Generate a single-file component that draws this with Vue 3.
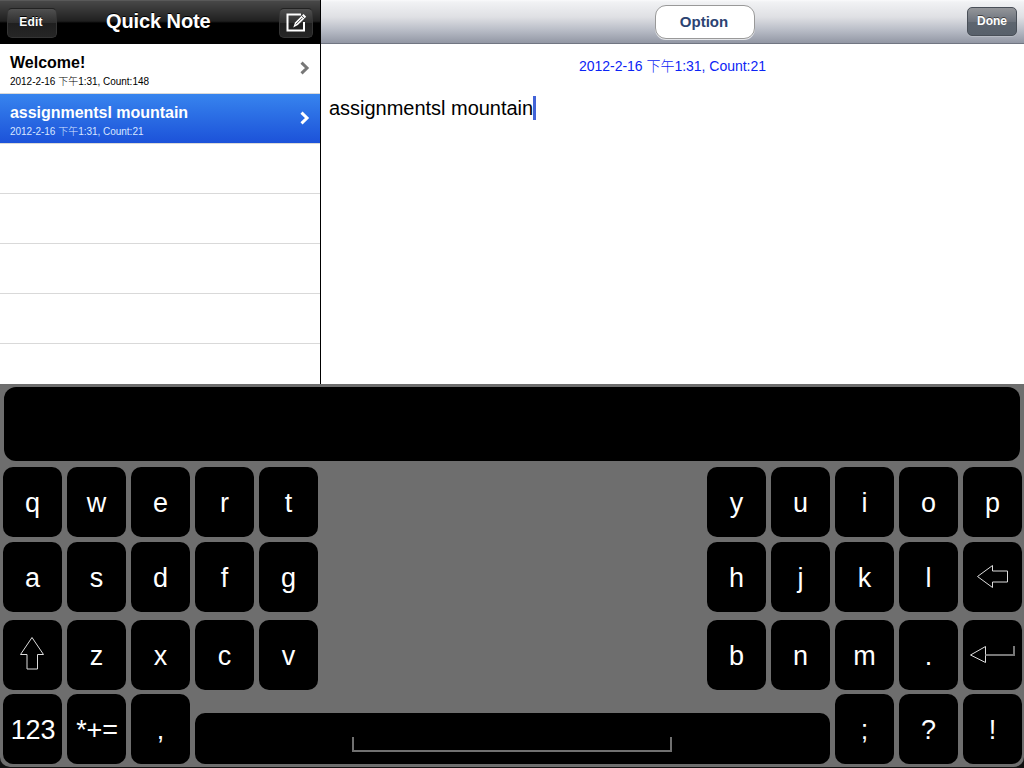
<script setup>
const notes = [
  { title: 'Welcome!', date: '2012-2-16 ', period: '下午', rest: '1:31, Count:148', kind: 'welcome' },
  { title: 'assignmentsl mountain', date: '2012-2-16 ', period: '下午', rest: '1:31, Count:21', kind: 'selected' },
]
const rows = [
  { left: ['q', 'w', 'e', 'r', 't'], right: ['y', 'u', 'i', 'o', 'p'], name: 'first' },
  { left: ['a', 's', 'd', 'f', 'g'], right: ['h', 'j', 'k', 'l', 'delete'], name: 'second' },
  { left: ['shift', 'z', 'x', 'c', 'v'], right: ['b', 'n', 'm', '.', 'return'], name: 'third' },
  { left: ['123', '*+=', ','], space: true, right: [';', '?', '!'], name: 'fourth' },
]
</script>

<template>
  <div class="screen">
    <div class="panes">
      <aside class="sidebar">
        <header class="side-bar">
          <button class="dark-btn edit">Edit</button>
          <h1>Quick Note</h1>
          <button class="dark-btn compose">
            <svg width="26" height="24" viewBox="0 0 26 24">
              <path d="M18 3.500H4.500v16h16.500v-8.500" fill="none" stroke="#fff" stroke-width="2" />
              <path d="M10.300 16.500l1.700-5 8.500-8.500 2.700 2.700-8.300 8.300z" fill="#fff" />
              <path d="M18.700 4.600l2.800 2.800M12.900 13.300l6.500-6.500" stroke="#333" stroke-width=".9" />
            </svg>
          </button>
        </header>
        <ul class="list">
          <li v-for="n in notes" :key="n.title" class="note" :class="n.kind">
            <div class="lines">
              <div class="title"><span>{{ n.title }}</span></div>
              <div class="meta">{{ n.date }}<span class="cjk">{{ n.period }}</span>{{ n.rest }}</div>
            </div>
            <svg class="chev" width="10" height="14" viewBox="0 0 10 14">
              <path d="M1.500 1.700L7 7l-5.500 5.300" fill="none" stroke="currentColor" stroke-width="3" />
            </svg>
          </li>
          <li v-for="i in 5" :key="i" class="note"></li>
        </ul>
      </aside>
      <main class="editor">
        <header class="edit-bar">
          <button class="option">Option</button>
          <button class="done">Done</button>
        </header>
        <div class="stamp">2012-2-16 <span class="cjk">下午</span>1:31, Count:21</div>
        <div class="body"><span class="body-text">assignmentsl mountain</span><i class="caret"></i></div>
      </main>
    </div>
    <div class="keyboard-wrap">
      <section class="keyboard">
        <div class="candidates"></div>
        <div v-for="row in rows" :key="row.name" class="krow" :class="row.name">
          <div class="group">
            <div v-for="k in row.left" :key="k" class="key">
              <svg v-if="k === 'shift'" width="59" height="70" viewBox="0 0 59 70">
                <path d="M29 17.500L40.500 34.500H34.500V49H24V34.500H17.500Z" fill="none" stroke="#ddd" stroke-width="1" />
              </svg>
              <span v-else :class="{ digits: k === '123', symbols: k === '*+=' }">{{ k }}</span>
            </div>
          </div>
          <div v-if="row.space" class="space"><i class="bracket"></i></div>
          <div class="group">
            <div v-for="k in row.right" :key="k" class="key">
              <svg v-if="k === 'delete'" width="59" height="70" viewBox="0 0 59 70">
                <path d="M14.500 34.500L29.500 23.500V29H44.500V40H29.500V45.500Z" fill="none" stroke="#ddd" stroke-width="1" />
              </svg>
              <svg v-else-if="k === 'return'" width="59" height="70" viewBox="0 0 59 70">
                <path d="M7.500 35L22.500 26.500V42.500Z" fill="none" stroke="#ddd" stroke-width="1" />
                <path d="M22.500 35H51V26" fill="none" stroke="#777" stroke-width="2" />
              </svg>
              <span v-else>{{ k }}</span>
            </div>
          </div>
        </div>
      </section>
    </div>
  </div>
</template>

<style>
body { overflow: hidden; background: #000; }
</style>

<style scoped>
* { box-sizing: border-box; margin: 0; padding: 0; }
.screen {
  width: 1024px; height: 768px; display: flex; flex-direction: column;
  overflow: hidden; background: #000;
  font-family: "Liberation Sans", Arial, "Noto Sans CJK TC", sans-serif;
}
button { font-family: inherit; font-weight: bold; border: 0; }
.panes { display: flex; height: 384px; }
.sidebar { width: 320px; background: #fff; overflow: hidden; flex: none; }
.side-bar {
  height: 44px; display: flex; align-items: center; padding: 1px 7px 0;
  background: linear-gradient(#6a6a6a 0, #484848 1px, #202020 21px, #131313 22px, #000 23px, #000 100%);
}
.side-bar h1 { font-size: 20px; line-height: 24px; color: #fff; letter-spacing: -.1px; text-shadow: 0 -1px 0 #000; margin: -3px 0 0 49px; white-space: nowrap; }
.dark-btn {
  height: 30px; border-radius: 5px; color: #fff; font-size: 12px;
  background: linear-gradient(#505050, #2e2e2e 50%, #1f1f1f 51%, #262626);
  border: 1px solid #353535; border-top-color: #222;
  text-shadow: 0 -1px 0 #000;
}
.edit { width: 50px; padding: 0 2px 1px 0; letter-spacing: .15px; }
.compose { width: 34px; display: flex; align-items: center; justify-content: center; margin-left: auto; }
.list { list-style: none; }
.note { height: 50px; border-bottom: 1px solid #d9d9d9; display: flex; justify-content: space-between; padding: 0 10px; color: #000; }
.lines { white-space: nowrap; }
.title { font-weight: bold; font-size: 16px; line-height: 18px; padding-top: 10px; }
.welcome .title { letter-spacing: 0; }
.selected .title { letter-spacing: -.03px; }
.meta { font-size: 10px; line-height: 12px; margin-top: 4px; letter-spacing: -.02px; white-space: pre; }
.cjk { font-family: "Noto Sans CJK TC", sans-serif; font-weight: 300; line-height: 1px; }
.chev { color: #777; margin-top: 17px; }
.selected { color: #fff; background: linear-gradient(#3784ee, #1c52d9); }
.selected .meta { color: #d8e6ff; }
.selected .chev { color: #fff; }
.editor { flex: 1; background: #fff; border-left: 1px solid #000; }
.edit-bar {
  height: 44px; display: flex; align-items: center; justify-content: flex-end; padding: 0 7px 0 0; gap: 212px;
  background: linear-gradient(#fafafb 0, #f1f2f4 2px, #dfe0e4 17px, #b9bdc7 30px, #9297a4 43px);
  border-bottom: 1px solid #717682;
}
.option {
  width: 100px; height: 34px; border-radius: 11px; background: #fff; border: 1px solid #999;
  color: #2c4372; font-size: 15px; padding-right: 2px; box-shadow: 0 1px 0 #e3e5e9;
}
.done {
  width: 50px; height: 29px; border-radius: 5px; color: #fff; font-size: 12px; padding: 0 0 1px;
  background: linear-gradient(#94969a, #6d737d 50%, #5e6670 51%, #58606b);
  border: 1px solid #494f58; box-shadow: 0 1px 0 #b6bac3; text-shadow: 0 -1px 0 #444;
}
.stamp { color: #0b24f5; font-size: 14px; line-height: 16px; text-align: center; margin-top: 14px; white-space: pre; letter-spacing: -.02px; }
.body { display: flex; align-items: center; height: 24px; margin: 22px 0 0 8px; }
.body-text { font-size: 20px; line-height: 24px; white-space: nowrap; letter-spacing: -.02px; }
.caret { width: 3px; height: 24px; background: #4263d8; }
.keyboard-wrap { height: 384px; background: #111; }
.keyboard {
  height: 383px; background: #6e6e6e; border-radius: 0 0 10px 10px; padding: 3px 2px 0 3px;
}
.candidates { height: 74px; margin: 0 2px 0 1px; border-radius: 12px; background: #000; }
.krow { display: flex; justify-content: space-between; align-items: flex-end; }
.first { margin-top: 6px; }
.second { margin-top: 5px; }
.third { margin-top: 8px; }
.fourth { margin-top: 4px; }
.group { display: flex; gap: 5px; }
.key {
  width: 59px; height: 70px; border-radius: 10px; background: #000; color: #fff;
  font-size: 27px; display: flex; align-items: center; justify-content: center;
}
.key span { padding-top: 2px; }
.key .digits { letter-spacing: -.2px; padding-left: 1px; }
.key .symbols { letter-spacing: -.1px; padding-left: 1px; }
.key svg { display: block; }
.space { width: 635px; height: 51px; border-radius: 10px; background: #000; display: flex; padding: 24px 0 0 157px; }
.bracket { width: 320px; height: 15px; border: 2px solid #707070; border-top: 0; }
</style>
